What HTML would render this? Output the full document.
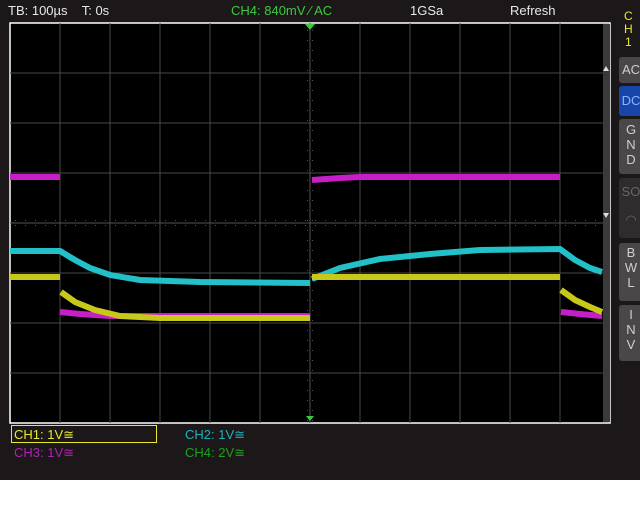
<!DOCTYPE html>
<html><head><style>
body{margin:0;width:640px;height:520px;background:#fff;overflow:hidden;font-family:"Liberation Sans",sans-serif}
#scope{position:absolute;left:0;top:0;width:640px;height:480px;background:#1c181a}
.t{position:absolute;font-size:13px;white-space:nowrap}
.btn{position:absolute;left:619px;width:24px;background:#4a4748;color:#cfcfcf;font-size:13px;text-align:center;line-height:15px;border-radius:3px}
</style></head><body>
<div id="scope">
<div class="t" style="left:8px;top:3px;color:#e8e8e8">TB: 100µs&nbsp;&nbsp;&nbsp; T: 0s</div>
<div class="t" style="left:231px;top:3px;color:#3ec83e">CH4: 840mV ⁄ AC</div>
<div class="t" style="left:410px;top:3px;color:#e8e8e8">1GSa</div>
<div class="t" style="left:510px;top:3px;color:#e8e8e8">Refresh</div>
<div class="t" style="left:624px;top:10px;color:#e8e830;line-height:13px;text-align:center;font-size:12px">C<br>H<br>1</div>
<svg width="640" height="480" style="position:absolute;left:0;top:0">
<rect x="10" y="23" width="600" height="400" fill="#000" stroke="#fff" stroke-width="1.5"/>
<rect x="603" y="24" width="7" height="398" fill="#3a3a3a"/>
<g stroke="#484848" stroke-width="1">
<path d="M60 23V423M110 23V423M160 23V423M210 23V423M260 23V423M360 23V423M410 23V423M460 23V423M510 23V423M560 23V423M10 73H603M10 123H603M10 173H603M10 273H603M10 323H603M10 373H603"/>
<path d="M10 223H603M310 23V423" stroke="#555"/>
<path stroke="#555" stroke-dasharray="1 9" stroke-dashoffset="-5" d="M10 220.5H603M10 225.5H603" />
<path stroke="#555" stroke-dasharray="1 9" stroke-dashoffset="-7" d="M307.5 23V423M312.5 23V423"/>
</g>
<polygon points="305,24 315,24 310,30" fill="#3ec83e"/>
<polygon points="603,71 609,71 606,66" fill="#ddd"/>
<polygon points="603,213 609,213 606,218" fill="#ddd"/>
<g fill="none" stroke-width="6">
<path stroke="#c81ec8" d="M10 177H60M60 312L80 314 110 316 160 316H310M312 180L340 178 360 177H560M561 312L580 314 602 316"/>
<path stroke="#22c0c8" d="M10 251H60L75 260 90 268 110 275 140 280 200 282 310 283M312 279L340 268 380 259 430 254 480 250 560 249L575 260 590 268 602 272"/>
<path stroke="#c8c81a" d="M10 277H60M61 292L75 302 95 310 120 316 160 318H310M312 277H560M561 290L575 300 590 307 602 312"/>
</g>
<polygon points="306,416 314,416 310,421" fill="#3ec83e"/>
</svg>
<div class="btn" style="top:57px;height:26px;line-height:26px">AC</div>
<div class="btn" style="top:86px;height:30px;line-height:30px;background:#1846a8;color:#8ab4ff">DC</div>
<div class="btn" style="top:119px;padding-top:3px;height:52px">G<br>N<br>D</div>
<div class="btn" style="top:178px;height:60px;background:#2e2c2d;color:#666;line-height:28px">SO<br>◠</div>
<div class="btn" style="top:243px;padding-top:2px;height:56px">B<br>W<br>L</div>
<div class="btn" style="top:305px;padding-top:2px;height:54px">I<br>N<br>V</div>
<div style="position:absolute;left:11px;top:425px;width:144px;height:16px;border:1.5px solid #e8e830"></div>
<div class="t" style="left:14px;top:427px;color:#e8e830">CH1: 1V≅</div>
<div class="t" style="left:185px;top:427px;color:#22b0b8">CH2: 1V≅</div>
<div class="t" style="left:14px;top:445px;color:#b020b0">CH3: 1V≅</div>
<div class="t" style="left:185px;top:445px;color:#20a020">CH4: 2V≅</div>
</div>
</body></html>
